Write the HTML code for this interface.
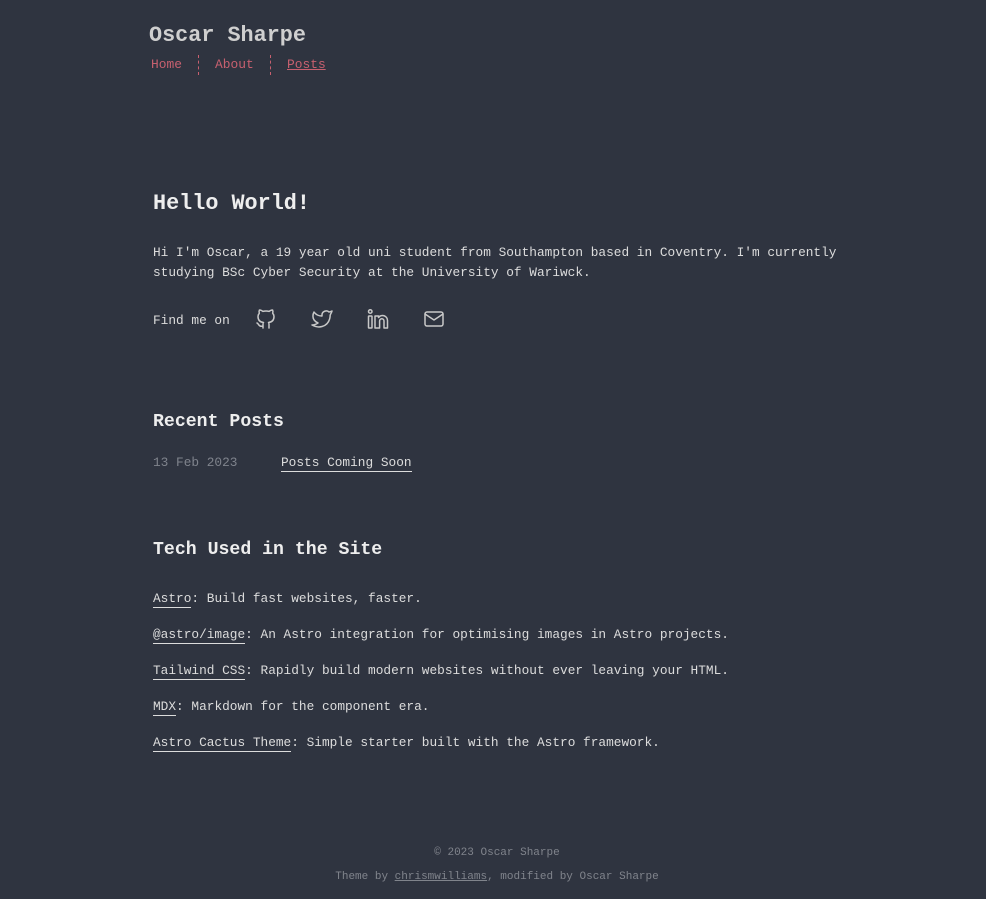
<!DOCTYPE html>
<html><head><meta charset="utf-8"><style>
*{margin:0;padding:0;box-sizing:border-box}
html,body{width:986px;height:899px;background:#2f3440;overflow:hidden}
body{font-family:"Liberation Mono","DejaVu Sans Mono",monospace;color:#dcdcdc;position:relative}
.a{position:absolute;white-space:nowrap}
.t{font-size:12.8px}
u{text-decoration:none;border-bottom:1px solid #dcdcdc;padding-bottom:1px}
.nav{font-size:12.9px;color:#c7606f}
.sep{position:absolute;top:55px;height:20px;border-left:1px dashed #c7606f}
svg{position:absolute;fill:none;stroke:#c8c8c8;stroke-width:1.5;stroke-linecap:round;stroke-linejoin:round}
</style></head><body>
<div class="a" style="left:149px;top:23px;font-size:21.8px;font-weight:bold;color:#cfcfcf">Oscar Sharpe</div>
<div class="a nav" style="left:151px;top:57px">Home</div>
<div class="sep" style="left:198px"></div>
<div class="a nav" style="left:215px;top:57px">About</div>
<div class="sep" style="left:270px"></div>
<div class="a nav" style="left:287px;top:57px;text-decoration:underline">Posts</div>

<div class="a" style="left:153px;top:191px;font-size:21.8px;font-weight:bold;color:#eee">Hello World!</div>
<div class="a t" style="left:153px;top:243px;line-height:20px">Hi I'm Oscar, a 19 year old uni student from Southampton based in Coventry. I'm currently<br>studying BSc Cyber Security at the University of Wariwck.</div>
<div class="a t" style="left:153px;top:313px">Find me on</div>
<svg style="left:254px;top:307px" width="24" height="24" viewBox="0 0 24 24"><path d="M9 19c-4.3 1.4-4.3-2.5-6-3m12 5v-3.5c0-1 .1-1.4-.5-2 2.8-.3 5.5-1.4 5.5-6a4.6 4.6 0 0 0-1.3-3.2 4.2 4.2 0 0 0-.1-3.2s-1.1-.3-3.5 1.3a12.3 12.3 0 0 0-6.2 0C6.5 2.8 5.4 3.1 5.4 3.1a4.2 4.2 0 0 0-.1 3.2A4.6 4.6 0 0 0 4 9.5c0 4.6 2.7 5.7 5.5 6-.6.6-.6 1.2-.5 2V21"/></svg>
<svg style="left:310px;top:307px" width="24" height="24" viewBox="0 0 24 24"><path d="M22 4.01c-1 .49-1.98.689-3 .99-1.121-1.265-2.783-1.335-4.38-.737S11.977 6.323 12 8v1c-3.245.083-6.135-1.395-8-4 0 0-4.182 7.433 4 11-1.872 1.247-3.739 2.088-6 2 3.308 1.803 6.913 2.423 10.034 1.517 3.58-1.04 6.522-3.723 7.651-7.742a13.84 13.84 0 0 0 .497-3.753C20.18 7.773 21.692 5.25 22 4.009z"/></svg>
<svg style="left:366px;top:307px" width="24" height="24" viewBox="0 0 24 24"><rect x="2.5" y="9" width="3.5" height="12" rx="0.5"/><circle cx="4.25" cy="4.5" r="1.75"/><path d="M9 21V9h3.5v1.5a5 5 0 0 1 9 3V21h-3.5v-7a2.2 2.2 0 0 0-4.4 0V21z"/></svg>
<svg style="left:422px;top:307px" width="24" height="24" viewBox="0 0 24 24"><rect x="3" y="5" width="18" height="14" rx="2"/><path d="M3 7l9 6 9-6"/></svg>

<div class="a" style="left:153px;top:412px;font-size:18.2px;font-weight:bold;color:#eee">Recent Posts</div>
<div class="a t" style="left:153px;top:455px;color:#7f838c">13 Feb 2023</div>
<div class="a t" style="left:281px;top:455px"><u>Posts Coming Soon</u></div>

<div class="a" style="left:153px;top:540px;font-size:18.2px;font-weight:bold;color:#eee">Tech Used in the Site</div>
<div class="a t" style="left:153px;top:591px"><u>Astro</u>: Build fast websites, faster.</div>
<div class="a t" style="left:153px;top:627px"><u>@astro/image</u>: An Astro integration for optimising images in Astro projects.</div>
<div class="a t" style="left:153px;top:663px"><u>Tailwind CSS</u>: Rapidly build modern websites without ever leaving your HTML.</div>
<div class="a t" style="left:153px;top:699px"><u>MDX</u>: Markdown for the component era.</div>
<div class="a t" style="left:153px;top:735px"><u>Astro Cactus Theme</u>: Simple starter built with the Astro framework.</div>

<div class="a" style="left:4px;width:986px;text-align:center;top:847px;font-size:11px;color:#80848c">© 2023 Oscar Sharpe</div>
<div class="a" style="left:4px;width:986px;text-align:center;top:871px;font-size:11px;color:#80848c">Theme by <span style="text-decoration:underline">chrismwilliams</span>, modified by Oscar Sharpe</div>
</body></html>
